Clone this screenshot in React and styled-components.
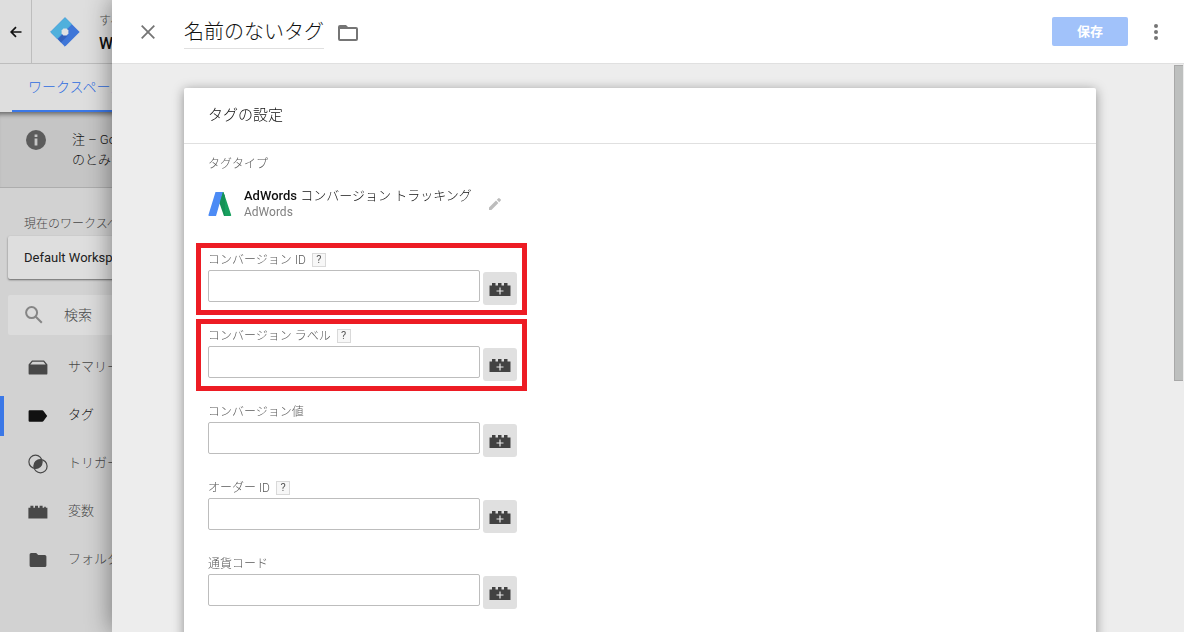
import React, {useState} from 'react';
import styled, {createGlobalStyle} from 'styled-components';

const navItems = [
  {id: 'summary', label: 'サマリー'},
  {id: 'tag', label: 'タグ'},
  {id: 'trigger', label: 'トリガー'},
  {id: 'variable', label: '変数'},
  {id: 'folder', label: 'フォルダ'},
];

const fields = [
  {id: 'conversionId', label: 'コンバージョン ID', help: true, marked: true},
  {id: 'conversionLabel', label: 'コンバージョン ラベル', help: true, marked: true},
  {id: 'conversionValue', label: 'コンバージョン値'},
  {id: 'orderId', label: 'オーダー ID', help: true},
  {id: 'currencyCode', label: '通貨コード'},
];

export default function App() {
  const [name, setName] = useState('名前のないタグ');
  const [values, setValues] = useState({});

  const onChange = e => {
    setValues({...values, [e.target.name]: e.target.value});
  }

  return (
    <>
      <GlobalStyle />
      <Workspace>
        <TopBar>
          <BackButton aria-label="戻る"><BackIcon /></BackButton>
          <LogoIcon />
          <Account>
            <AccountPath>すべて</AccountPath>
            <AccountName>Web</AccountName>
          </Account>
        </TopBar>
        <TabBar>
          <Tab href="#workspace">ワークスペース</Tab>
        </TabBar>
        <Notice>
          <InfoIcon />
          <p>注 – Google<br />のとみなす</p>
        </Notice>
        <SideBar>
          <SideLabel>現在のワークスペース</SideLabel>
          <WorkspaceButton>Default Workspace</WorkspaceButton>
          <SearchBox>
            <SearchIcon />
            <SearchInput aria-label="検索" placeholder="検索" />
          </SearchBox>
          <Nav>
            {navItems.map(item => (
              <NavLink key={item.id} href={`#${item.id}`} $active={item.id === 'tag'}>
                <NavIcon type={item.id} />
                <NavText>{item.label}</NavText>
              </NavLink>
            ))}
          </Nav>
        </SideBar>
      </Workspace>

      <Sheet>
        <SheetHeader>
          <IconButton aria-label="閉じる"><CloseIcon /></IconButton>
          <NameInput aria-label="タグ名" value={name} onChange={e => setName(e.target.value)} />
          <IconButton aria-label="フォルダ"><FolderOutlineIcon /></IconButton>
          <SaveButton>保存</SaveButton>
          <IconButton aria-label="メニュー"><MoreIcon /></IconButton>
        </SheetHeader>
        <SheetBody>
          <Card>
            <CardTitle>タグの設定</CardTitle>
            <CardBody>
              <Caption>タグタイプ</Caption>
              <TagType>
                <AdWordsIcon />
                <div>
                  <TagTypeName><strong>AdWords</strong> コンバージョン トラッキング</TagTypeName>
                  <TagTypeVendor>AdWords</TagTypeVendor>
                </div>
                <EditButton aria-label="編集"><PencilIcon /></EditButton>
              </TagType>
              <FieldList>
                {fields.map(field => (
                  <Field key={field.id} $marked={field.marked}>
                    <FieldHead>
                      <label htmlFor={field.id}>{field.label}</label>
                      {field.help && <HelpButton>?</HelpButton>}
                    </FieldHead>
                    <FieldRow>
                      <TextInput
                        id={field.id}
                        name={field.id}
                        value={values[field.id] || ''}
                        onChange={onChange}
                      />
                      <VariableButton aria-label="変数を追加"><BrickPlusIcon /></VariableButton>
                    </FieldRow>
                  </Field>
                ))}
              </FieldList>
            </CardBody>
          </Card>
          <ScrollThumb />
        </SheetBody>
      </Sheet>
    </>
  )
}

/* icons */
const BackIcon = () => (
  <svg width="12" height="12" viewBox="0 0 12 12" fill="none" stroke="#111" strokeWidth="1.7">
    <path d="M11.5 6H1.5M6 1.2L1.2 6L6 10.8" />
  </svg>
)

const LogoIcon = () => (
  <svg width="30" height="30" viewBox="0 0 30 30">
    <path d="M15 .8L29.2 15L15 29.2L.8 15Z" fill="#3f76d8" stroke="#3f76d8" strokeLinejoin="round" />
    <path d="M15 .8L21.4 7.2L7.2 21.4L.8 15Z" fill="#50b0dc" stroke="#50b0dc" strokeLinejoin="round" />
    <path d="M8 22L14 16L17.5 19L11 25.5Z" fill="#3462bd" />
    <path d="M13.4 11.6h3.2l1.8 1.8v3.2l-1.8 1.8h-3.2l-1.8-1.8v-3.2z" fill="#e2e2e2" />
  </svg>
)

const InfoIcon = () => (
  <svg width="20" height="20" viewBox="0 0 20 20">
    <circle cx="10" cy="10" r="10" fill="#5c5c5c" />
    <path d="M8.6 4.5h2.8v2.4H8.6zM8.6 8.6h2.8v6.8H8.6z" fill="#c5c5c5" />
  </svg>
)

const SearchIcon = () => (
  <svg width="18" height="18" viewBox="0 0 18 18" fill="none" stroke="#858585" strokeWidth="2">
    <circle cx="6.6" cy="6.6" r="5.5" />
    <path d="M10.8 10.8L16.8 16.8" />
  </svg>
)

const NavIcon = ({type}) => (
  <svg width="20" height="20" viewBox="0 0 20 20" fill="currentColor">
    {type === 'summary' && (
      <path fillRule="evenodd" d="M4 2.600h12l3.400 4V15.400a1.2 1.2 0 0 1-1.2 1.2H1.8A1.2 1.2 0 0 1 .6 15.400V6.600zM4.600 3.800L2.300 6.600h15.400L15.400 3.800z" />
    )}
    {type === 'tag' && <path d="M1.6 4.3h12.6a1.6 1.6 0 0 1 1.3.7L19.2 10l-3.7 5a1.6 1.6 0 0 1-1.3.7H1.6a1 1 0 0 1-1-1V5.3a1 1 0 0 1 1-1z" />}
    {type === 'trigger' && (
      <>
        <circle cx="7.5" cy="7.8" r="6.6" fill="none" stroke="currentColor" strokeWidth="1.2" />
        <circle cx="12.5" cy="12.2" r="6.6" fill="none" stroke="currentColor" strokeWidth="1.2" />
        <path d="M13.8 5.700A6.600 6.600 0 0 1 6.200 14.300A6.600 6.600 0 0 1 13.800 5.700z" />
      </>
    )}
    {type === 'variable' && <path d="M.4 5.800h2V3.800h3v2h1.600v-2h3v2h1.600v-2h3v2h1.600v-1h1.600v1h1.600V16.400H.4z" />}
    {type === 'folder' && <path d="M3.2 3h5l2 2h6.6a1.6 1.6 0 0 1 1.6 1.6v8.8a1.6 1.6 0 0 1-1.6 1.6H3.2a1.6 1.6 0 0 1-1.6-1.6V4.6A1.6 1.6 0 0 1 3.2 3z" />}
  </svg>
)

const CloseIcon = () => (
  <svg width="14" height="14" viewBox="0 0 14 14" stroke="#757575" strokeWidth="1.8">
    <path d="M.7.7L13.3 13.3M13.3.7L.7 13.3" />
  </svg>
)

const FolderOutlineIcon = () => (
  <svg width="20" height="18" viewBox="0 0 20 18" fill="#757575">
    <path fillRule="evenodd" d="M2 2h6l2 2h8a2 2 0 0 1 2 2v10a2 2 0 0 1-2 2H2a2 2 0 0 1-2-2V4a2 2 0 0 1 2-2zM2 6v10h16V6z" />
  </svg>
)

const MoreIcon = () => (
  <svg width="4" height="16" viewBox="0 0 4 16" fill="#757575">
    <circle cx="2" cy="2" r="2" />
    <circle cx="2" cy="8" r="2" />
    <circle cx="2" cy="14" r="2" />
  </svg>
)

const AdWordsIcon = () => (
  <svg width="24" height="24" viewBox="0 0 24 24">
    <path d="M9 0h6.5l7.5 22.6a1 1 0 0 1-1 1.4h-5.700z" fill="#17a05e" />
    <path d="M7.5 0h7.5L8 24H1.5a1 1 0 0 1-1-1.3z" fill="#4c8bf5" />
    <path d="M15 0L11.600 11.500L16 24H17V4z" fill="#159256" />
  </svg>
)

const PencilIcon = () => (
  <svg width="14" height="14" viewBox="0 0 14 14" fill="#bdbdbd">
    <path d="M1 10.6V13h2.4l7-7-2.4-2.4zM12.8 3.6a.7.7 0 0 0 0-1l-1.4-1.4a.7.7 0 0 0-1 0L8.800 2.800 11.200 5.200z" />
  </svg>
)

const BrickPlusIcon = () => (
  <svg width="22" height="14" viewBox="0 0 22 14">
    <path d="M.5 3.5h2.500V1h3.500v2.500h2.500V1h3.500v2.500h2.500V1h3.500v2.500h3V14H.5z" fill="#424242" />
    <path d="M11 5.5v7M7.5 9h7" stroke="#e8e8e8" strokeWidth="1.2" />
  </svg>
)

/* styles */
const GlobalStyle = createGlobalStyle`
  *, *::before, *::after {
    box-sizing: border-box;
  }
  body {
    margin: 0;
    overflow: hidden;
    background-color: #d2d2d2;
    color: #111;
    font-family: Roboto, 'Noto Sans CJK JP', sans-serif;
    font-size: 13px;
    font-weight: 300;
  }
  h2, p {
    margin: 0;
    font-weight: inherit;
  }
  button, input {
    padding: 0;
    border: 0;
    outline: none;
    background: none;
    color: inherit;
    font: inherit;
  }
  button {
    cursor: pointer;
  }
  a {
    color: inherit;
    text-decoration: none;
  }
  svg {
    display: block;
    flex-shrink: 0;
  }
`;

const Workspace = styled.div`
  display: flex;
  flex-direction: column;
  height: 100vh;
  white-space: nowrap;
  overflow: hidden;
`;

const TopBar = styled.header`
  display: flex;
  align-items: center;
  height: 64px;
  flex-shrink: 0;
  background-color: #dedede;
  border-bottom: 1px solid #bdbdbd;
`;

const BackButton = styled.button`
  display: flex;
  align-items: center;
  justify-content: center;
  align-self: stretch;
  width: 32px;
  margin-right: 18px;
  border-right: 1px solid #bdbdbd;
`;

const Account = styled.div`
  margin-left: 19px;
`;

const AccountPath = styled.p`
  font-size: 12px;
  line-height: 24px;
  color: #505050;
`;

const AccountName = styled.p`
  font-size: 16px;
  font-weight: 500;
  line-height: 22px;
`;

const TabBar = styled.nav`
  position: relative;
  display: flex;
  height: 48px;
  flex-shrink: 0;
  padding-left: 12px;
  background-color: #dedede;
`;

const Tab = styled.a`
  padding: 0 16px;
  border-bottom: 2px solid #3b78e7;
  font-size: 14px;
  line-height: 46px;
  color: #2f6ce0;
`;

const Notice = styled.div`
  display: flex;
  gap: 26px;
  height: 76px;
  flex-shrink: 0;
  padding: 18px 26px;
  background-color: #c5c5c5;
  border-bottom: 1px solid #adadad;
  box-shadow: inset 0 6px 5px -4px rgba(0, 0, 0, 0.5);
  line-height: 20px;
`;

const SideBar = styled.aside`
  display: flex;
  flex-direction: column;
  width: 240px;
  padding-top: 24px;
  color: #484848;
`;

const SideLabel = styled.p`
  padding-left: 24px;
  font-size: 12px;
  line-height: 24px;
`;

const WorkspaceButton = styled.button`
  height: 43px;
  margin: 0 0 16px 8px;
  padding: 0 16px;
  border-radius: 2px;
  background-color: #dedede;
  box-shadow: 0 1px 2px rgba(0, 0, 0, 0.5);
  font-weight: 400;
  text-align: left;
  color: #212121;
`;

const SearchBox = styled.div`
  display: flex;
  align-items: center;
  gap: 21px;
  height: 40px;
  margin: 0 0 13px 8px;
  padding-left: 17px;
  border-radius: 2px;
  background-color: #dcdcdc;
`;

const SearchInput = styled.input`
  width: 100%;
  font-size: 14px;
  &::placeholder {
    color: #484848;
  }
`;

const Nav = styled.nav`
  display: flex;
  flex-direction: column;
  gap: 8px;
`;

const NavLink = styled.a`
  display: flex;
  align-items: center;
  gap: 20px;
  height: 40px;
  padding-left: 24px;
  border-left: 4px solid ${({ $active }) => $active ? '#3b78e7' : 'transparent'};
  color: ${({ $active }) => $active ? '#111' : '#484848'};
`;

const NavText = styled.span`
  padding-bottom: 2px;
  line-height: 20px;
`;

const Sheet = styled.main`
  position: fixed;
  top: 0;
  right: 0;
  bottom: 0;
  left: 112px;
  z-index: 20;
  display: flex;
  flex-direction: column;
  background-color: #ededed;
  box-shadow: 0 0 24px rgba(0, 0, 0, 0.45);
`;

const SheetHeader = styled.header`
  display: flex;
  align-items: center;
  height: 64px;
  flex-shrink: 0;
  padding: 0 8px 0 16px;
  background-color: #fff;
  border-bottom: 1px solid #e0e0e0;
`;

const IconButton = styled.button`
  display: flex;
  align-items: center;
  justify-content: center;
  width: 40px;
  height: 40px;
`;

const NameInput = styled.input`
  width: 140px;
  height: 34px;
  margin-left: 16px;
  margin-right: 4px;
  padding-bottom: 2px;
  border-bottom: 1px solid #e0e0e0;
  font-size: 20px;
`;

const SaveButton = styled.button`
  width: 76px;
  height: 29px;
  margin: 0 8px 0 auto;
  padding-bottom: 2px;
  border-radius: 2px;
  background-color: #a1c2fa;
  font-weight: 700;
  color: #fff;
`;

const SheetBody = styled.div`
  position: relative;
  flex: 1;
  min-height: 0;
  padding: 24px 88px 24px 72px;
  overflow: hidden;
`;

const Card = styled.section`
  border-radius: 2px;
  background-color: #fff;
  box-shadow: 0 2px 12px rgba(0, 0, 0, 0.4);
`;

const CardTitle = styled.h2`
  padding: 0 24px;
  border-bottom: 1px solid #e0e0e0;
  font-size: 15px;
  line-height: 55px;
`;

const CardBody = styled.div`
  padding: 12px 24px 48px;
`;

const Caption = styled.p`
  font-size: 12px;
  line-height: 16px;
  color: #585858;
`;

const TagType = styled.div`
  display: flex;
  align-items: center;
  margin-top: 16px;
  line-height: 16px;
  & > svg {
    margin-right: 12px;
  }
`;

const TagTypeName = styled.p`
  strong {
    font-weight: 500;
  }
`;

const TagTypeVendor = styled.p`
  font-size: 12px;
  font-weight: 400;
  color: #808080;
`;

const EditButton = styled.button`
  margin-left: 16px;
`;

const FieldList = styled.div`
  display: flex;
  flex-direction: column;
  align-items: flex-start;
  gap: 22px;
  margin-top: 32px;
`;

const Field = styled.div`
  position: relative;
  &::after {
    content: '';
    display: ${({ $marked }) => $marked ? 'block' : 'none'};
    position: absolute;
    inset: -9px -10px -9px -12px;
    border: 5px solid #ed1c24;
    pointer-events: none;
  }
`;

const FieldHead = styled.div`
  display: flex;
  align-items: center;
  gap: 6px;
  height: 16px;
  margin-bottom: 2px;
  font-size: 12px;
  line-height: 16px;
  color: #585858;
`;

const HelpButton = styled.button`
  width: 14px;
  height: 14px;
  border: 1px solid #d9d9d9;
  background-color: #f7f7f7;
  font-size: 11px;
  line-height: 12px;
  font-weight: 400;
`;

const FieldRow = styled.div`
  display: flex;
  gap: 3px;
  height: 36px;
`;

const TextInput = styled.input`
  width: 272px;
  height: 32px;
  padding: 0 8px;
  border: 1px solid #bdbdbd;
  border-radius: 2px;
`;

const VariableButton = styled.button`
  display: flex;
  align-items: center;
  justify-content: center;
  width: 34px;
  height: 33px;
  margin-top: 2px;
  border-radius: 3px;
  background-color: #e0e0e0;
`;

const ScrollThumb = styled.div`
  position: absolute;
  top: 1px;
  right: 1px;
  width: 9px;
  height: 316px;
  border: 1px solid #a8a8a8;
  border-right: 0;
  background-color: #bdbfbe;
`;
